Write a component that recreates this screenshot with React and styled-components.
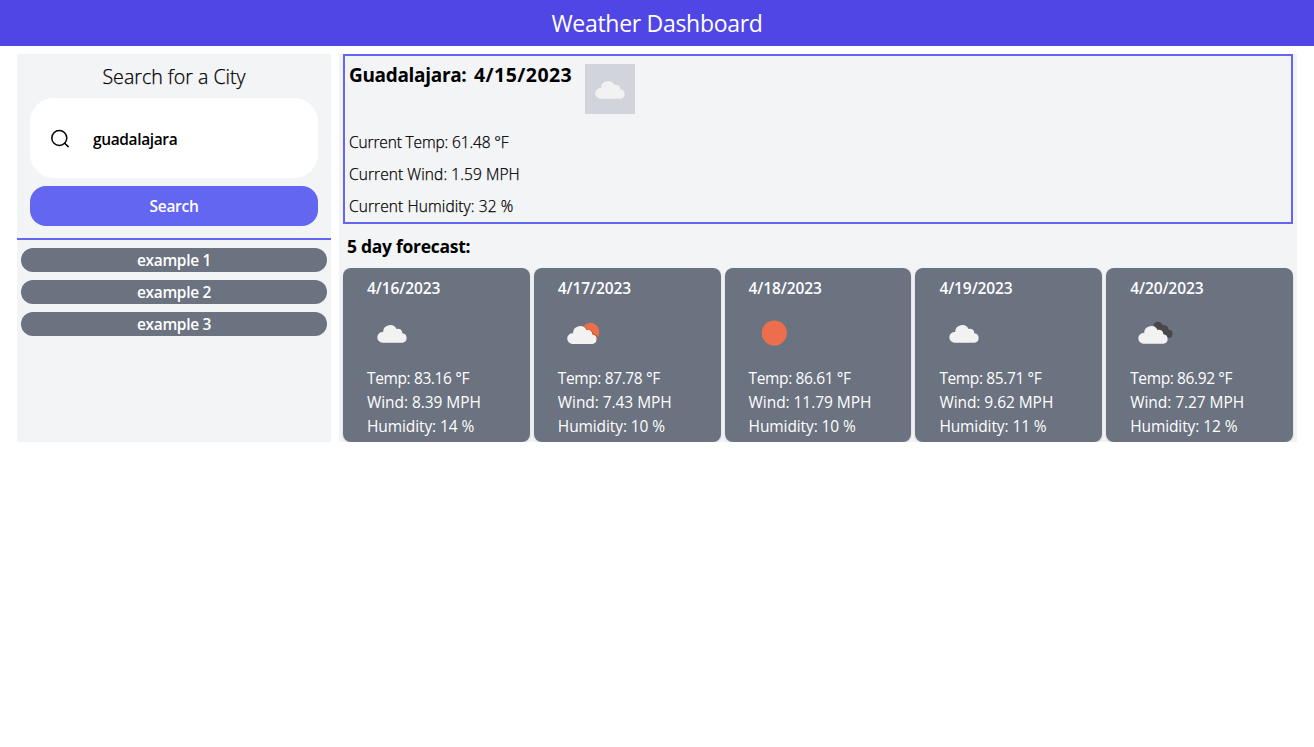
import React from "react";
import styled, { createGlobalStyle } from "styled-components";

const GlobalStyle = createGlobalStyle`
  *, *::before, *::after { box-sizing: border-box; }
  body {
    margin: 0;
    background: #fff;
    color: #000;
    font-family: "Open Sans", "Noto Sans", sans-serif;
    font-size: 15.5px;
    line-height: 24px;
  }
  h1, h2, h3, p, ul { margin: 0; padding: 0; }
`;

const Header = styled.header`
  height: 46px;
  display: flex;
  align-items: center;
  justify-content: center;
  background: #4f46e5;
  color: #fff;
`;

const PageTitle = styled.h1`
  font-size: 23px;
  line-height: 32px;
  font-weight: 400;
  letter-spacing: -0.3px;
`;

const Main = styled.main`
  display: grid;
  grid-template-columns: 314px 958px;
  column-gap: 8px;
  padding: 8px 17px 0;
`;

const Sidebar = styled.aside`
  height: 388px;
  background: #f3f4f6;
`;

const SearchForm = styled.form`
  display: flex;
  flex-direction: column;
  gap: 8px;
  padding: 8px 13px 12px;
  border-bottom: 2px solid #6366f1;
`;

const SearchTitle = styled.h2`
  height: 28px;
  padding-top: 1px;
  font-size: 19.6px;
  line-height: 28px;
  font-weight: 300;
  -webkit-text-stroke: 0.25px #000;
  text-align: center;
`;

const SearchField = styled.label`
  height: 80px;
  display: flex;
  align-items: center;
  gap: 21px;
  padding: 0 18px;
  border-radius: 24px;
  background: #fff;
`;

const CityInput = styled.input`
  flex: 1;
  min-width: 0;
  height: 26px;
  padding: 2px 0 0;
  border: 0;
  outline: 0;
  background: transparent;
  color: #000;
  font: 600 15.5px/24px "Open Sans", "Noto Sans", sans-serif;
  letter-spacing: -0.37px;
`;

const SearchButton = styled.button`
  height: 40px;
  padding: 0;
  border: 0;
  border-radius: 16px;
  background: #6366f1;
  color: #fff;
  font: 600 15.5px/24px "Open Sans", "Noto Sans", sans-serif;
  letter-spacing: -0.3px;
`;

const History = styled.ul`
  display: flex;
  flex-direction: column;
  gap: 8px;
  padding: 8px 4px;
  list-style: none;
`;

const HistoryItem = styled.li`
  border-radius: 12px;
  background: #6b7280;
  color: #fff;
  font-weight: 600;
  letter-spacing: -0.32px;
  text-align: center;
`;

const Content = styled.section`
  height: 388px;
  padding: 0 4px;
  background: #f3f4f6;
`;

const Current = styled.div`
  height: 170px;
  padding: 0 4px;
  border: 2px solid #6366f1;
`;

const CurrentHead = styled.div`
  height: 70px;
  display: flex;
  align-items: flex-start;
  padding-top: 5px;
`;

const City = styled.h2`
  width: 125px;
  font-size: 19px;
  line-height: 28px;
  font-weight: 700;
  letter-spacing: -0.32px;
`;

const CurrentDate = styled.h2`
  width: 111px;
  font-size: 19.5px;
  line-height: 28px;
  font-weight: 700;
  letter-spacing: 0.45px;
`;

const CurrentIcon = styled.div`
  width: 50px;
  height: 50px;
  margin-top: 3px;
  background: #d1d5db;
`;

const CurrentLine = styled.p`
  padding: 4px 0;
  font-weight: 300;
  -webkit-text-stroke: 0.25px #000;
  letter-spacing: ${(p) => p.$tracking || 0}px;
`;

const ForecastTitle = styled.h3`
  padding: 8px 4px;
  font-size: 17.5px;
  line-height: 28px;
  font-weight: 700;
  letter-spacing: -0.28px;
`;

const Cards = styled.div`
  display: grid;
  grid-template-columns: repeat(5, 1fr);
  gap: 4px;
`;

const Card = styled.article`
  height: 174px;
  padding: 8px 24px 4px;
  border-radius: 8px;
  background: #6b7280;
  color: #fff;
  box-shadow: 0 1px 3px rgba(0, 0, 0, 0.1), 0 1px 2px rgba(0, 0, 0, 0.06);
`;

const CardDate = styled.h3`
  font-size: inherit;
  font-weight: 600;
  letter-spacing: -0.1px;
`;

const CardIcon = styled.div`
  width: 50px;
  height: 50px;
  margin: 8px 0;
`;

const Reading = styled.p`
  white-space: nowrap;
  letter-spacing: ${(p) => p.$tracking || 0}px;
`;

const Glyph = styled.svg`
  display: block;
`;

const CLOUD =
  "M5.2 19 A5.2 5.2 0 0 1 6.2 8.6 A6.9 6.9 0 0 1 19.3 5.6 A4.2 4.2 0 0 1 24.9 9.9 A4.6 4.6 0 0 1 25.4 19 Z";

function Cloud({ x, y }) {
  return <path transform={`translate(${x} ${y}) scale(1.025)`} d={CLOUD} fill="#f2f2f2" />;
}

function WeatherIcon({ kind }) {
  return (
    <Glyph width="50" height="50" viewBox="0 0 50 50">
      {kind === "sun" && <circle cx="25.3" cy="25" r="12.6" fill="#ec6e4c" />}
      {kind === "partly" && (
        <>
          <circle cx="32.4" cy="23.7" r="8.9" fill="#ec6e4c" />
          <path d="M24.6 18.2 A7.2 7.2 0 0 1 28.8 21.8 A5.4 5.4 0 0 1 35 26.2 A5 5 0 0 1 39.2 29.6" fill="none" stroke="#d8512c" strokeWidth="1.2" />
          <Cloud x={8.7} y={16.4} />
        </>
      )}
      {kind === "cloud" && <Cloud x={9.8} y={15.2} />}
      {kind === "broken" && (
        <>
          <path
            d="M23.3 16.5 A5.2 5.2 0 0 1 32.7 17.2 A4.6 4.6 0 0 1 38.6 21.7 A4.1 4.1 0 1 1 38.4 29.9 L33 28 L27 22 Z"
            fill="#484848"
          />
          <Cloud x={7.8} y={16.2} />
        </>
      )}
    </Glyph>
  );
}

function SearchIcon() {
  return (
    <Glyph width="24" height="24" viewBox="0 0 24 24" fill="none" stroke="#000" strokeWidth="1.5" strokeLinecap="round">
      <circle cx="11.3" cy="12" r="7.5" />
      <path d="M16.7 17.3 L20.2 20.6" />
    </Glyph>
  );
}

const forecast = [
  { date: "4/16/2023", kind: "cloud", temp: "83.16", wind: "8.39", humidity: 14 },
  { date: "4/17/2023", kind: "partly", temp: "87.78", wind: "7.43", humidity: 10 },
  { date: "4/18/2023", kind: "sun", temp: "86.61", wind: "11.79", humidity: 10 },
  { date: "4/19/2023", kind: "cloud", temp: "85.71", wind: "9.62", humidity: 11 },
  { date: "4/20/2023", kind: "broken", temp: "86.92", wind: "7.27", humidity: 12 },
];

export default function App() {
  return (
    <>
      <GlobalStyle />
      <Header>
        <PageTitle>Weather Dashboard</PageTitle>
      </Header>
      <Main>
        <Sidebar>
          <SearchForm>
            <SearchTitle>Search for a City</SearchTitle>
            <SearchField>
              <SearchIcon />
              <CityInput defaultValue="guadalajara" />
            </SearchField>
            <SearchButton type="button">Search</SearchButton>
          </SearchForm>
          <History>
            <HistoryItem>example 1</HistoryItem>
            <HistoryItem>example 2</HistoryItem>
            <HistoryItem>example 3</HistoryItem>
          </History>
        </Sidebar>
        <Content>
          <Current>
            <CurrentHead>
              <City>Guadalajara:</City>
              <CurrentDate>4/15/2023</CurrentDate>
              <CurrentIcon>
                <WeatherIcon kind="cloud" />
              </CurrentIcon>
            </CurrentHead>
            <CurrentLine $tracking={-0.14}>Current Temp: 61.48 °F</CurrentLine>
            <CurrentLine $tracking={0.08}>Current Wind: 1.59 MPH</CurrentLine>
            <CurrentLine $tracking={0.1}>Current Humidity: 32 %</CurrentLine>
          </Current>
          <ForecastTitle>5 day forecast:</ForecastTitle>
          <Cards>
            {forecast.map((day) => (
              <Card key={day.date}>
                <CardDate>{day.date}</CardDate>
                <CardIcon>
                  <WeatherIcon kind={day.kind} />
                </CardIcon>
                <Reading $tracking={-0.38}>Temp: {day.temp} °F</Reading>
                <Reading $tracking={-0.06}>Wind: {day.wind} MPH</Reading>
                <Reading $tracking={-0.1}>Humidity: {day.humidity} %</Reading>
              </Card>
            ))}
          </Cards>
        </Content>
      </Main>
    </>
  );
}
